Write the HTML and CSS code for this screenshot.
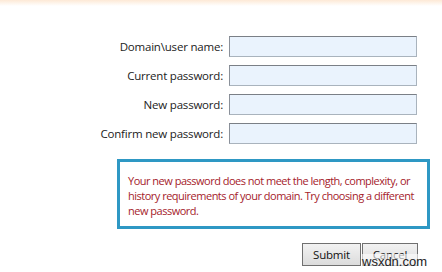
FILE: index.html
```html
<!DOCTYPE html>
<html lang="en">

<head>
  <meta charset="UTF-8">
  <title>Change password</title>
  <link rel="stylesheet" href="styles.css">
</head>

<body>
  <div class="topbar"></div>

  <div class="page">
    <form class="fields">
      <label for="user">Domain\user name:</label>
      <input id="user" type="text">
      <label for="oldpass">Current password:</label>
      <input id="oldpass" type="password">
      <label for="newpass">New password:</label>
      <input id="newpass" type="password">
      <label for="confirm">Confirm new password:</label>
      <input id="confirm" type="password">
    </form>

    <div class="error">
      Your new password does not meet the length, complexity, or<br>
      history requirements of your domain. Try choosing a different<br>
      new password.
    </div>

    <div class="buttons">
      <button type="button" class="btn submit">Submit</button>
      <button type="button" class="btn cancel">Cancel</button>
    </div>
  </div>

  <div class="watermark">wsxdn.com</div>
</body>

</html>
```

FILE: styles.css
```css
body {
  margin: 0;
  padding: 0;
  background-color: white;
  font-family: "Open Sans", "Noto Sans", sans-serif;
  font-size: 11.5px;
  letter-spacing: -0.2px;
  color: #222;
  overflow: hidden;
}

.topbar {
  height: 6px;
  background: linear-gradient(#fde9d6, #ffffff);
}

.page {
  width: 442px;
  position: relative;
}

.fields {
  display: grid;
  grid-template-columns: 223px 188px;
  column-gap: 6px;
  row-gap: 8px;
  align-items: center;
  margin-top: 30px;
}

.fields label {
  text-align: right;
}

.fields input {
  box-sizing: border-box;
  height: 21px;
  margin: 0;
  border: 1px solid #a9b3bd;
  border-top-color: #7a7f86;
  border-left-color: #8a9099;
  background-color: #eaf3fd;
}

.error {
  box-sizing: border-box;
  width: 313px;
  height: 70px;
  margin: 15px 0 0 117px;
  padding: 11px 6px 0 8px;
  border: 3px solid #2e98c4;
  color: #a5222b;
  font-size: 11px;
  letter-spacing: -0.5px;
  line-height: 15px;
  white-space: nowrap;
}

.buttons {
  display: flex;
  justify-content: flex-end;
  gap: 1px;
  margin-top: 14px;
  padding-right: 24px;
}

.btn {
  box-sizing: border-box;
  height: 23px;
  margin: 0;
  border: 1px solid #707070;
  background: linear-gradient(#f2f2f2, #dcdcdc);
  font-family: "Open Sans", "Noto Sans", sans-serif;
  font-size: 11.5px;
  letter-spacing: -0.2px;
  color: #111;
  padding: 0;
}

.submit {
  width: 59px;
}

.cancel {
  width: 56px;
}

.watermark {
  position: absolute;
  left: 362px;
  top: 254px;
  font-family: "Liberation Sans", sans-serif;
  font-size: 13px;
  letter-spacing: 0;
  color: #222;
  background: rgba(255, 255, 255, 0.6);
}
```
